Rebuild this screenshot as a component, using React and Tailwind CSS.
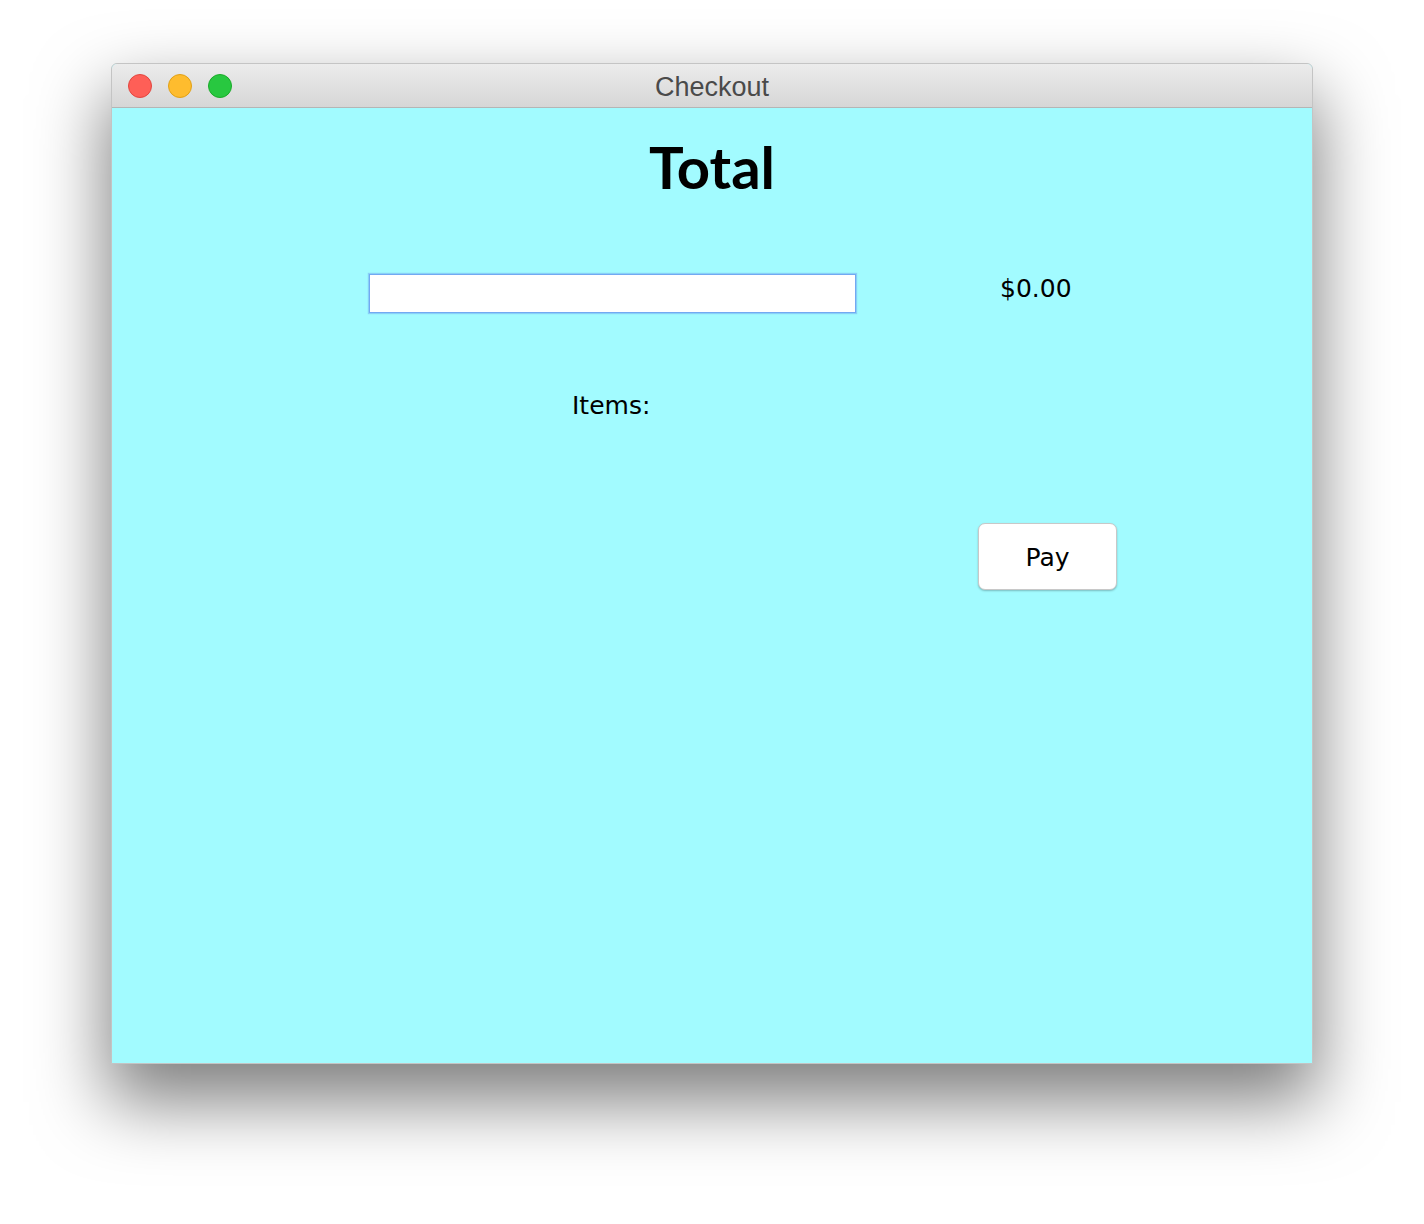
import React from "react";

export default function App() {
  return (
    <div className="w-[1424px] h-[1224px] bg-white pt-[63px] pl-[111px]" style={{ fontFamily: '"DejaVu Sans", sans-serif' }}>
      <div className="w-[1202px] h-[1001px] flex flex-col rounded-t-[6px] border border-[#c4c4c4] shadow-[0_34px_70px_4px_rgba(0,0,0,0.5)] bg-[#a2fbff] overflow-hidden">
        <div className="h-[44px] shrink-0 flex items-center relative bg-gradient-to-b from-[#ececec] to-[#d6d6d6] border-b border-[#b5b5b5]">
          <div className="flex gap-[16px] pl-[16px]">
            <span className="w-[24px] h-[24px] rounded-full bg-[#fe5f57] border border-[#e2463f]" />
            <span className="w-[24px] h-[24px] rounded-full bg-[#febc2e] border border-[#e1a116]" />
            <span className="w-[24px] h-[24px] rounded-full bg-[#28c840] border border-[#1aab29]" />
          </div>
          <div className="absolute inset-0 flex items-center justify-center pt-[3px] text-[27px] text-[#4a4a4a]" style={{ fontFamily: '"Liberation Sans", Arial, sans-serif' }}>
            Checkout
          </div>
        </div>
        <div className="flex-1 flex flex-col">
          <div className="pt-[26px] text-center text-[58px] font-bold leading-[66px] text-black" style={{ fontFamily: 'Lato, sans-serif' }}>
            Total
          </div>
          <div className="flex items-center mt-[74px]">
            <div className="ml-[257px] w-[487px] h-[39px] bg-white border-[1.5px] border-[#72a9f2] shadow-[0_0_1px_1px_rgba(110,165,240,0.5)]" />
            <div className="ml-[144px] text-[25px] text-black -mt-[9px]">$0.00</div>
          </div>
          <div className="mt-[74px] ml-[460px] text-[25px] text-black">Items:</div>
          <div className="mt-[98px] ml-[866px] w-[139px] h-[67px] pt-[3px] bg-white rounded-[7px] border border-[#c8c8c8] shadow-[0_1px_2px_rgba(0,0,0,0.25)] flex items-center justify-center text-[25px] text-black">
            Pay
          </div>
        </div>
      </div>
    </div>
  );
}
